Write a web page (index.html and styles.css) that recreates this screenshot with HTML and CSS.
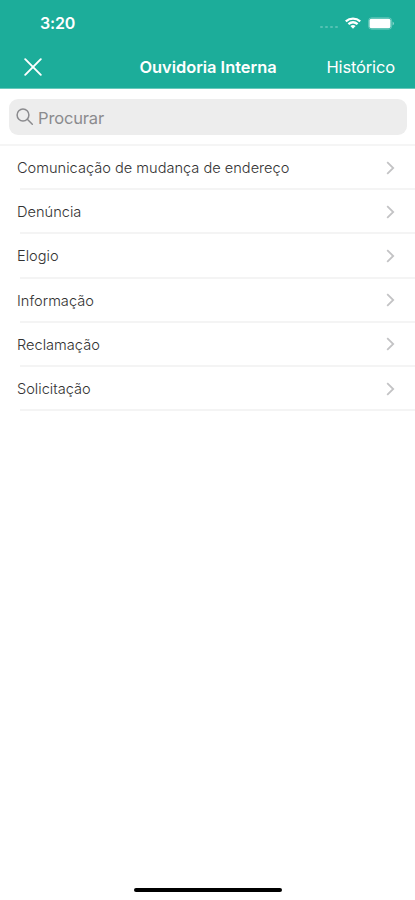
FILE: index.html
```html
<!DOCTYPE html>
<html lang="pt-BR">
<head>
<meta charset="utf-8">
<meta name="viewport" content="width=device-width, initial-scale=1">
<title>Ouvidoria Interna</title>
<link rel="stylesheet" href="styles.css">
</head>
<body>
<header class="header">
  <div class="status">
    <span class="time">3:20</span>
    <div class="indicators">
      <span class="signal"><i></i><i></i><i></i><i></i></span>
      <svg class="wifi" width="16" height="12" viewBox="0 0 16 12"><path d="M.8 4.4C5 .7 11 .7 15.2 4.4M3.4 7.2C6.2 4.8 9.8 4.8 12.6 7.2" fill="none" stroke="#fff" stroke-width="2.3"/><path d="M5.4 9Q8 7.2 10.6 9L8 11.8Z" fill="#fff"/></svg>
      <svg class="battery" width="27" height="13" viewBox="0 0 27 13"><rect x=".6" y=".8" width="23" height="11.4" rx="3" fill="none" stroke="#fff" stroke-opacity=".3"/><rect x="1.5" y="1.7" width="21" height="9.6" rx="1.8" fill="#fff"/><path d="M24.7 4.5Q27 6.5 24.7 8.5Z" fill="#fff" fill-opacity=".6"/></svg>
    </div>
  </div>
  <nav class="nav">
    <svg class="close" width="18" height="18" viewBox="0 0 18 18"><path d="M1.2 1.2 16.8 16.8M16.8 1.2 1.2 16.8" stroke="#fff" stroke-width="1.9" stroke-linecap="round"/></svg>
    <h1 class="title">Ouvidoria Interna</h1>
    <span class="history">Histórico</span>
  </nav>
</header>
<main class="main">
  <div class="search-area">
    <div class="search">
      <svg width="18" height="18" viewBox="0 0 18 18" fill="none" stroke="#8b8b8e" stroke-width="1.5" stroke-linecap="round"><circle cx="7" cy="7" r="5.9"/><path d="m11.3 11.3 5 5"/></svg>
      <span class="placeholder">Procurar</span>
    </div>
  </div>
  <ul class="list">
    <li class="row"><span>Comunicação de mudança de endereço</span><svg class="chevron" viewBox="0 0 9 14"><path d="m1.2 1.2 6 5.8-6 5.8"/></svg></li>
    <li class="row"><span>Denúncia</span><svg class="chevron" viewBox="0 0 9 14"><path d="m1.2 1.2 6 5.8-6 5.8"/></svg></li>
    <li class="row"><span>Elogio</span><svg class="chevron" viewBox="0 0 9 14"><path d="m1.2 1.2 6 5.8-6 5.8"/></svg></li>
    <li class="row"><span>Informação</span><svg class="chevron" viewBox="0 0 9 14"><path d="m1.2 1.2 6 5.8-6 5.8"/></svg></li>
    <li class="row"><span>Reclamação</span><svg class="chevron" viewBox="0 0 9 14"><path d="m1.2 1.2 6 5.8-6 5.8"/></svg></li>
    <li class="row"><span>Solicitação</span><svg class="chevron" viewBox="0 0 9 14"><path d="m1.2 1.2 6 5.8-6 5.8"/></svg></li>
  </ul>
</main>
<footer class="footer"><div class="home-bar"></div></footer>
</body>
</html>
```
FILE: styles.css
```css
* { box-sizing: border-box; }
body {
  margin: 0;
  height: 900px;
  display: flex;
  flex-direction: column;
  overflow: hidden;
  background: #fff;
  font-family: Inter, "Liberation Sans", sans-serif;
}
svg { display: block; flex: none; }
.header { height: 89px; background: #1cad9a; border-bottom: 1px solid #68c9bc; color: #fff; }
.status { height: 45px; padding: 1px 20px 0 40px; display: flex; align-items: center; justify-content: space-between; }
.time { font-size: 16px; font-weight: 600; letter-spacing: -.2px; }
.indicators { display: flex; align-items: center; }
.signal { display: flex; gap: 2px; margin: 8px 7px 0 0; }
.signal i { width: 3px; height: 2px; border-radius: 1px; background: rgba(255, 255, 255, .25); }
.wifi { margin-right: 7px; }
.nav { height: 43px; padding: 0 20px 0 24px; display: grid; grid-template-columns: 67px 1fr 70px; align-items: center; }
.title { margin: 0; font-size: 16.4px; font-weight: 600; text-align: center; white-space: nowrap; }
.history { font-size: 16.5px; letter-spacing: -.15px; justify-self: end; white-space: nowrap; }
.main { flex: 1; }
.search-area { height: 57px; padding: 10px 8px 0 9px; border-bottom: 2px solid #f5f5f5; }
.search { height: 36px; border-radius: 9px; background: #ededed; display: flex; align-items: center; gap: 4px; padding-left: 7px; color: #8b8b8e; }
.placeholder { padding-top: 1px; font-size: 16.5px; letter-spacing: -.15px; }
.list { list-style: none; margin: 0; padding: 0; }
.row { height: 44.2px; margin-left: 20px; padding: 1px 20px 0 0; border-bottom: 2px solid #f4f4f4; display: flex; align-items: center; justify-content: space-between; color: #333; font-size: 14.6px; font-weight: 300; white-space: nowrap; }
.row span { margin-left: -3px; padding-top: 1px; }
.chevron { width: 9px; height: 14px; fill: none; stroke: #c3c3c5; stroke-width: 1.8; }
.footer { height: 13px; }
.home-bar { width: 148px; height: 4px; margin: 1px 0 0 134px; border-radius: 2px; background: #000; }
```
